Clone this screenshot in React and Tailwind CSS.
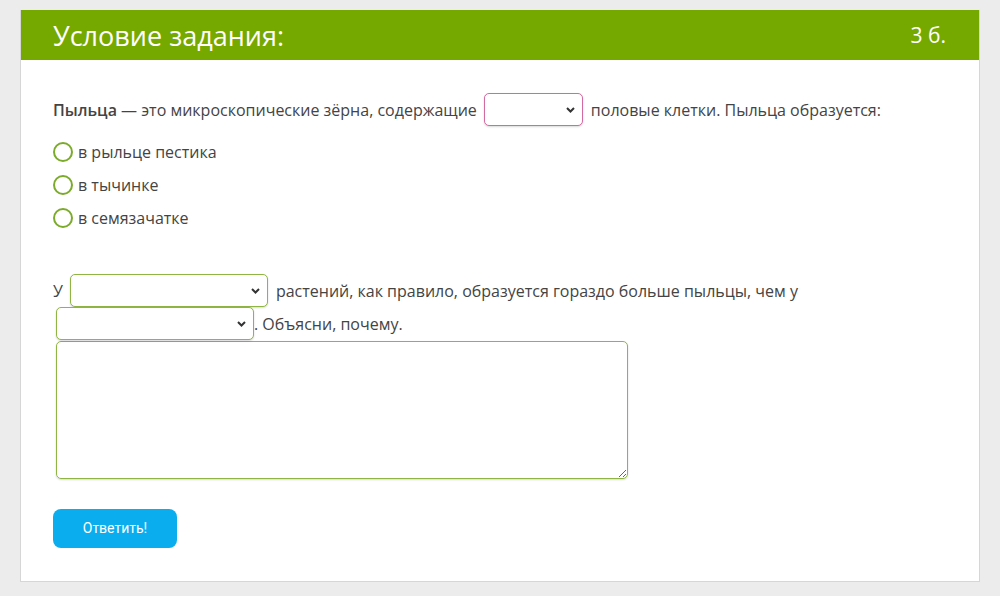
const font = { fontFamily: '"Open Sans", "Liberation Sans", sans-serif' }

function Chevron() {
  return (
    <svg width="9" height="6" viewBox="0 0 9 6" className="absolute right-[8px] top-1/2 -translate-y-1/2">
      <path d="M1 1l3.5 3.5L8 1" fill="none" stroke="#333" strokeWidth="2" />
    </svg>
  )
}

function Select({ width, tone }) {
  const border = tone === 'pink' ? 'border-[#d36aa0]' : 'border-[#8fb542]'
  return (
    <span className={`relative inline-block h-[33px] shrink-0 ${width}`}>
      <select
        className={`h-full w-full appearance-none rounded-[5px] border bg-white ${border} shadow-[0_1px_2px_rgba(0,0,0,0.15)] outline-none`}
      >
        <option value=""></option>
      </select>
      <Chevron />
    </span>
  )
}

function Radio({ label }) {
  return (
    <label className="flex h-[33px] items-center gap-[5px]">
      <span className="h-[20px] w-[20px] rounded-full border-2 border-[#7cab2c]" />
      <span>{label}</span>
    </label>
  )
}

export default function App() {
  return (
    <div className="h-[596px] bg-[#ececec] px-[20px] pt-[10px]" style={font}>
      <div className="h-[572px] border border-t-0 border-[#d6d6d6] bg-white">
        <div className="flex h-[50px] items-center justify-between bg-[#76a900] pl-[32px] pr-[33px] text-white">
          <h1 className="text-[27px] leading-none">Условие задания:</h1>
          <span className="text-[21px] leading-none">3 б.</span>
        </div>

        <div className="px-[32px] pt-[33px] text-[16px] text-[#444]">
          <div className="flex items-center">
            <p>
              <b className="font-semibold">Пыльца</b> — это микроскопические зёрна, содержащие
            </p>
            <span className="ml-[7px] mr-[8px]">
              <Select width="w-[99px]" tone="pink" />
            </span>
            <p>половые клетки. Пыльца образуется:</p>
          </div>

          <div className="mt-[9px] flex flex-col">
            <Radio label="в рыльце пестика" />
            <Radio label="в тычинке" />
            <Radio label="в семязачатке" />
          </div>

          <div className="mt-[40px] flex items-center">
            <span>У</span>
            <span className="ml-[7px] mr-[8px]">
              <Select width="w-[198px]" tone="green" />
            </span>
            <span>растений, как правило, образуется гораздо больше пыльцы, чем у</span>
          </div>
          <div className="flex items-center pl-[3px]">
            <Select width="w-[198px]" tone="green" />
            <span>. Объясни, почему.</span>
          </div>
          <div className="pl-[3px] pt-px">
            <textarea className="block h-[138px] w-[572px] rounded-[5px] border border-[#8fb542] shadow-[0_1px_2px_rgba(0,0,0,0.15)] outline-none" />
          </div>

          <button
            className="mt-[30px] h-[39px] w-[124px] rounded-[8px] bg-[#0aaeef] text-[14px] text-white"
            style={{ fontFamily: 'Roboto, "Liberation Sans", sans-serif' }}
          >
            Ответить!
          </button>
        </div>
      </div>
    </div>
  )
}
